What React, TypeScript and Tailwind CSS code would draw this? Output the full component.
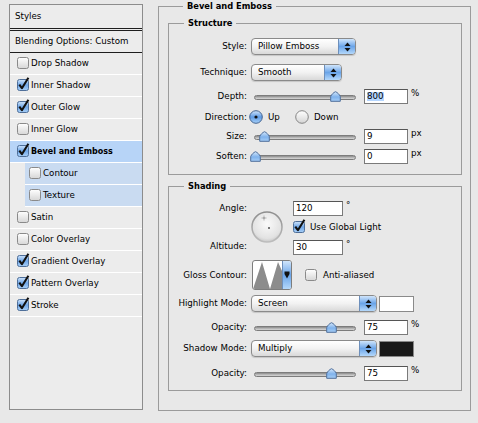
import React from 'react';

type StyleItem = { name: string; on: boolean; sub?: boolean; active?: boolean };

const items: StyleItem[] = [
  { name: 'Drop Shadow', on: false },
  { name: 'Inner Shadow', on: true },
  { name: 'Outer Glow', on: true },
  { name: 'Inner Glow', on: false },
  { name: 'Bevel and Emboss', on: true, active: true },
  { name: 'Contour', on: false, sub: true },
  { name: 'Texture', on: false, sub: true },
  { name: 'Satin', on: false },
  { name: 'Color Overlay', on: false },
  { name: 'Gradient Overlay', on: true },
  { name: 'Pattern Overlay', on: true },
  { name: 'Stroke', on: true },
];

function CheckBox({ on }: { on: boolean }) {
  return (
    <svg width="13" height="14" viewBox="0 0 13 14" className="shrink-0">
      <defs>
        <linearGradient id="cbOff" x1="0" y1="0" x2="0" y2="1">
          <stop offset="0" stopColor="#ffffff" />
          <stop offset="1" stopColor="#d6d6d6" />
        </linearGradient>
        <linearGradient id="cbOn" x1="0" y1="0" x2="0" y2="1">
          <stop offset="0" stopColor="#cfe4fb" />
          <stop offset="0.5" stopColor="#6ea6e8" />
          <stop offset="1" stopColor="#a9d0f7" />
        </linearGradient>
      </defs>
      <rect
        x="0.5"
        y="2.5"
        width="11"
        height="11"
        rx="2"
        fill={on ? 'url(#cbOn)' : 'url(#cbOff)'}
        stroke={on ? '#4f6f99' : '#8a8a8a'}
      />
      {on && <path d="M2.3 7.6 L4.9 11.2 L11.4 0.8" fill="none" stroke="#111" strokeWidth="2.1" strokeLinejoin="round" />}
    </svg>
  );
}

function Radio({ on }: { on: boolean }) {
  return (
    <svg width="14" height="14" viewBox="0 0 14 14" className="shrink-0">
      <defs>
        <linearGradient id="rOff" x1="0" y1="0" x2="0" y2="1">
          <stop offset="0" stopColor="#ffffff" />
          <stop offset="1" stopColor="#d4d4d4" />
        </linearGradient>
        <linearGradient id="rOn" x1="0" y1="0" x2="0" y2="1">
          <stop offset="0" stopColor="#d3e6fb" />
          <stop offset="0.5" stopColor="#5e9be4" />
          <stop offset="1" stopColor="#a9d1f8" />
        </linearGradient>
      </defs>
      <circle cx="7" cy="7" r="6.3" fill={on ? 'url(#rOn)' : 'url(#rOff)'} stroke={on ? '#44638f' : '#858585'} />
      {on && <circle cx="7" cy="7" r="1.6" fill="#111" />}
    </svg>
  );
}

function Arrows() {
  return (
    <svg width="7" height="10" viewBox="0 0 7 10">
      <path d="M3.5 0.5 L6.5 4 L0.5 4 Z" fill="#111" />
      <path d="M3.5 9.5 L6.5 6 L0.5 6 Z" fill="#111" />
    </svg>
  );
}

function Select({ value, width }: { value: string; width: string }) {
  return (
    <div className={`flex h-[17px] ${width} overflow-hidden rounded-[4px] border border-[#8a8a8a] bg-gradient-to-b from-white via-[#f2f2f2] to-[#d9d9d9] shadow-[0_1px_1px_rgba(0,0,0,0.15)]`}>
      <span className="flex flex-1 items-center pl-[6px] leading-none">{value}</span>
      <span className="flex w-[17px] items-center justify-center border-l border-[#6d8fbb] bg-gradient-to-b from-[#d0e5fb] via-[#6aa4e8] to-[#b4d8fb]">
        <Arrows />
      </span>
    </div>
  );
}

function TextBox({ value, width = 'w-[44px]', selected }: { value: string; width?: string; selected?: boolean }) {
  return (
    <div className={`flex h-[15px] ${width} items-center border border-[#7a7a7a] border-t-[#555] bg-white pl-[2px] leading-none`}>
      <span className={selected ? 'bg-[#b4d5fe]' : ''}>{value}</span>
    </div>
  );
}

function Slider({ pos }: { pos: number }) {
  return (
    <div className="relative h-[12px] w-[105px]">
      <div className="absolute left-[3px] right-0 top-[4px] h-[5px] rounded-full border border-[#7c7c7c] bg-gradient-to-b from-[#8a8a8a] via-[#b5b5b5] to-[#d8d8d8]" />
      <svg width="11" height="11" viewBox="0 0 11 11" className="absolute top-[0px]" style={{ left: pos - 5 }}>
        <defs>
          <linearGradient id="thumb" x1="0" y1="0" x2="0" y2="1">
            <stop offset="0" stopColor="#d6e8fb" />
            <stop offset="0.55" stopColor="#7fb2ec" />
            <stop offset="1" stopColor="#a6cef6" />
          </linearGradient>
        </defs>
        <path d="M5.5 0.7 C7.5 1.5 9.5 3.5 10.3 5.5 L10.3 10.3 L0.7 10.3 L0.7 5.5 C1.5 3.5 3.5 1.5 5.5 0.7 Z" fill="url(#thumb)" stroke="#50709c" />
      </svg>
    </div>
  );
}

function Row({ label, className = '', children }: { label: string; className?: string; children: React.ReactNode }) {
  return (
    <div className={`flex items-center ${className}`}>
      <span className="w-[78px] shrink-0 text-right leading-none">{label}</span>
      <div className="ml-[4px] flex items-center">{children}</div>
    </div>
  );
}

function SliderRow({ label, pos, value, unit, selected, className }: { label: string; pos: number; value: string; unit: string; selected?: boolean; className: string }) {
  return (
    <Row label={label} className={`h-[15px] ${className}`}>
      <Slider pos={pos} />
      <div className="ml-[8px]">
        <TextBox value={value} selected={selected} />
      </div>
      <span className="ml-[3px] self-start leading-none">{unit}</span>
    </Row>
  );
}

function Dial() {
  return (
    <svg width="32" height="32" viewBox="0 0 32 32">
      <defs>
        <radialGradient id="dial" cx="0.5" cy="0.4" r="0.6">
          <stop offset="0" stopColor="#fafafa" />
          <stop offset="0.8" stopColor="#e2e2e2" />
          <stop offset="1" stopColor="#c8c8c8" />
        </radialGradient>
        <linearGradient id="ring" x1="0" y1="0" x2="0" y2="1">
          <stop offset="0" stopColor="#8d8d8d" />
          <stop offset="1" stopColor="#bdbdbd" />
        </linearGradient>
      </defs>
      <circle cx="16" cy="16" r="15" fill="url(#dial)" stroke="url(#ring)" strokeWidth="1.5" />
      <path d="M13 4.5 L13 9.5 M10.5 7 L15.5 7" stroke="#b3b3b3" strokeWidth="1" />
      <rect x="12.5" y="6.5" width="1" height="1" fill="#666" />
      <rect x="17" y="16" width="2" height="2" fill="#777" />
    </svg>
  );
}

function Contour() {
  return (
    <div className="flex h-[30px] w-[40px] overflow-hidden rounded-[3px] border border-[#7d7d7d] bg-white">
      <svg width="29" height="28" viewBox="0 0 29 28" className="shrink-0">
        <path d="M0 28 L9 1 L17 28 L25 1 L29 10 L29 28 Z" fill="#8c8c8c" />
      </svg>
      <span className="flex flex-1 items-center justify-center border-l border-[#6d8fbb] bg-gradient-to-b from-[#d0e5fb] via-[#6aa4e8] to-[#b4d8fb]">
        <svg width="6" height="8" viewBox="0 0 6 8">
          <path d="M0.5 0.5 L5.5 0.5 L5.5 3 L3 7.5 L0.5 3 Z" fill="#111" />
        </svg>
      </span>
    </div>
  );
}

function Group({ title, className = '', children }: { title: string; className?: string; children: React.ReactNode }) {
  return (
    <fieldset className={`border border-[#9b9b9b] ${className}`}>
      <legend className="ml-[15px] px-[4px] text-[8.3px] font-bold leading-[13px]">{title}</legend>
      {children}
    </fieldset>
  );
}

function StylesList() {
  return (
    <div className="ml-[9px] mt-[4px] h-[406px] w-[134px] shrink-0 border border-[#8c8c8c] bg-[#ececec]">
      <div className="flex h-[26px] items-center border-b-[3px] border-double border-[#1e1e1e] pl-[5px]">Styles</div>
      <div className="flex h-[22px] items-center border-b border-[#1e1e1e] pl-[5px]">Blending Options: Custom</div>
      {items.map((it) => (
        <div key={it.name} className={`flex h-[22px] ${it.sub ? 'pl-[15px]' : ''} ${it.active ? 'bg-[#b7d4f7]' : ''}`}>
          <div
            className={`flex flex-1 items-center gap-[1px] border-b border-white ${it.sub ? 'bg-[#c9dbf1] pl-[4px]' : 'pl-[7px]'} ${it.active ? 'font-bold' : ''}`}
          >
            <span className="-mt-[3px]">
              <CheckBox on={it.on} />
            </span>
            <span className={`leading-none ${it.active ? 'text-[8px]' : ''}`}>{it.name}</span>
          </div>
        </div>
      ))}
    </div>
  );
}

export default function App() {
  return (
    <div className="flex h-[423px] w-[478px] bg-[#e8e8e8] font-['DejaVu_Sans',sans-serif] text-[8.7px] text-black">
      <StylesList />
      <Group title="Bevel and Emboss" className="ml-[15px] h-[411px] w-[313px] pl-[9px]">
        <Group title="Structure" className="mt-[4px] w-[294px] pb-[10px]">
          <Row label="Style:" className="mt-[8px] h-[17px]">
            <Select value="Pillow Emboss" width="w-[105px]" />
          </Row>
          <Row label="Technique:" className="mt-[9px] h-[17px]">
            <Select value="Smooth" width="w-[91px]" />
          </Row>
          <SliderRow label="Depth:" pos={84} value="800" unit="%" selected className="mt-[8px]" />
          <Row label="Direction:" className="mt-[6px] h-[14px]">
            <div className="-ml-[2px] flex items-center">
              <Radio on />
              <span className="ml-[5px] leading-none">Up</span>
              <span className="ml-[15px]">
                <Radio on={false} />
              </span>
              <span className="ml-[5px] leading-none">Down</span>
            </div>
          </Row>
          <SliderRow label="Size:" pos={13} value="9" unit="px" className="mt-[5px]" />
          <SliderRow label="Soften:" pos={4} value="0" unit="px" className="mt-[5px]" />
        </Group>
        <Group title="Shading" className="mt-[5px] w-[294px] pb-[9px]">
          <div className="mt-[8px] flex">
            <div className="flex w-[78px] shrink-0 flex-col items-end justify-between py-[3px] leading-none">
              <span>Angle:</span>
              <span>Altitude:</span>
            </div>
            <div className="ml-[4px] mt-[10px]">
              <Dial />
            </div>
            <div className="ml-[10px] flex flex-col">
              <div className="flex h-[14px]">
                <TextBox value="120" width="w-[50px]" />
                <span className="ml-[3px] leading-none">°</span>
              </div>
              <div className="mt-[4px] flex h-[16px] items-center">
                <span className="-mt-[3px]">
                  <CheckBox on />
                </span>
                <span className="ml-[4px] leading-none">Use Global Light</span>
              </div>
              <div className="mt-[5px] flex h-[14px]">
                <TextBox value="30" width="w-[50px]" />
                <span className="ml-[3px] leading-none">°</span>
              </div>
            </div>
          </div>
          <Row label="Gloss Contour:" className="mt-[6px] h-[30px]">
            <div className="ml-[1px]">
              <Contour />
            </div>
            <span className="ml-[13px] -mt-[3px]">
              <CheckBox on={false} />
            </span>
            <span className="ml-[5px] leading-none">Anti-aliased</span>
          </Row>
          <Row label="Highlight Mode:" className="mt-[5px] h-[17px]">
            <Select value="Screen" width="w-[126px]" />
            <div className="ml-[2px] h-[16px] w-[35px] border border-[#8a8a8a] bg-white" />
          </Row>
          <SliderRow label="Opacity:" pos={80} value="75" unit="%" className="mt-[8px]" />
          <Row label="Shadow Mode:" className="mt-[5px] h-[17px]">
            <Select value="Multiply" width="w-[126px]" />
            <div className="ml-[2px] h-[16px] w-[35px] border border-[#8a8a8a] bg-[#1a1a1a]" />
          </Row>
          <SliderRow label="Opacity:" pos={80} value="75" unit="%" className="mt-[9px]" />
        </Group>
      </Group>
    </div>
  );
}
